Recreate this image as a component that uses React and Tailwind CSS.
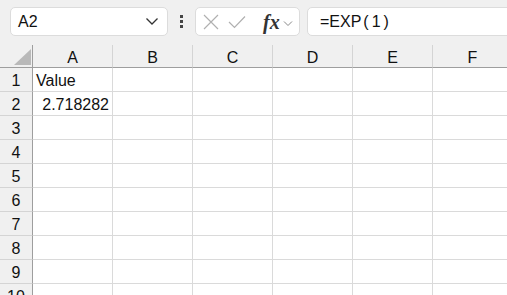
import React from "react";

const cols = ["A", "B", "C", "D", "E", "F"];
const rows = [1, 2, 3, 4, 5, 6, 7, 8, 9, 10];
const data = { "1-A": { v: "Value" }, "2-A": { v: "2.718282", num: true } };

export default function App() {
  return (
    <div className="w-[507px] h-[295px] overflow-hidden bg-white font-['Liberation_Sans',sans-serif] text-[16px] text-[#111]">
      {/* formula bar */}
      <div className="h-[45px] bg-[#f0f0f0] flex items-start pt-[7px] pl-[10px]">
        <div className="w-[158px] h-[29px] bg-white border border-[#dcdcdc] rounded-[5px] flex items-center justify-between pl-[7px] pr-[8px]">
          <span className="text-[16px]">A2</span>
          <svg width="14" height="9" viewBox="0 0 14 9">
            <path d="M1.5 1.5 L7 7 L12.5 1.5" fill="none" stroke="#333" strokeWidth="1.3" />
          </svg>
        </div>
        <div className="w-[27px] h-[29px] flex flex-col items-center justify-center gap-[2px]">
          <span className="w-[3px] h-[3px] bg-[#444]"></span>
          <span className="w-[3px] h-[3px] bg-[#444]"></span>
          <span className="w-[3px] h-[3px] bg-[#444]"></span>
        </div>
        <div className="w-[105px] h-[29px] bg-white border border-[#dcdcdc] rounded-[5px] flex items-center pl-[7px]">
          <svg width="16" height="16" viewBox="0 0 16 16">
            <path d="M1 1 L15 15 M15 1 L1 15" stroke="#b0b0b0" strokeWidth="1.2" />
          </svg>
          <svg className="ml-[9px]" width="18" height="14" viewBox="0 0 18 14">
            <path d="M1 7 L6.5 12.5 L17 1.5" fill="none" stroke="#b0b0b0" strokeWidth="1.2" />
          </svg>
          <span className="ml-[17px] font-['Liberation_Serif',serif] italic font-bold text-[20px] text-[#333] leading-none">fx</span>
          <svg className="ml-[3px] mt-[3px]" width="10" height="7" viewBox="0 0 10 7">
            <path d="M1 1.5 L5 5.5 L9 1.5" fill="none" stroke="#888" strokeWidth="1" />
          </svg>
        </div>
        <div className="ml-[7px] flex-1 -mr-[10px] h-[29px] bg-white border border-[#dcdcdc] rounded-[5px] flex items-center pl-[12px] pt-[1px]">
          <span>=EXP</span>
          <span className="tracking-[3px] ml-[2px]">(1)</span>
        </div>
      </div>

      {/* grid */}
      <div className="grid grid-cols-[33px_repeat(6,80px)] grid-rows-[23px_repeat(10,24px)]">
        <div className="bg-[#f0f0f0] border-r border-b border-[#9e9e9e] relative">
          <svg className="absolute left-[14px] top-[4px]" width="17" height="16" viewBox="0 0 17 16">
            <path d="M17 0 L17 16 L0 16 Z" fill="#b9b9b9" />
          </svg>
        </div>
        {cols.map((c) => (
          <div
            key={c}
            className="bg-[#f0f0f0] border-b border-[#9e9e9e] border-r-[1px] border-r-[#d4d4d4] flex items-center justify-center pt-[3px]"
          >
            {c}
          </div>
        ))}
        {rows.map((r) => (
          <React.Fragment key={r}>
            <div className="bg-[#f0f0f0] border-r border-r-[#9e9e9e] border-b border-b-[#d4d4d4] flex items-center justify-center pt-[2px]">
              {r}
            </div>
            {cols.map((c) => {
              const cell = data[`${r}-${c}`];
              return (
                <div
                  key={c}
                  className={
                    "border-r border-b border-[#dadada] flex items-center px-[3px] pt-[2px] " +
                    (cell && cell.num ? "justify-end" : "justify-start")
                  }
                >
                  {cell ? cell.v : ""}
                </div>
              );
            })}
          </React.Fragment>
        ))}
      </div>
    </div>
  );
}
